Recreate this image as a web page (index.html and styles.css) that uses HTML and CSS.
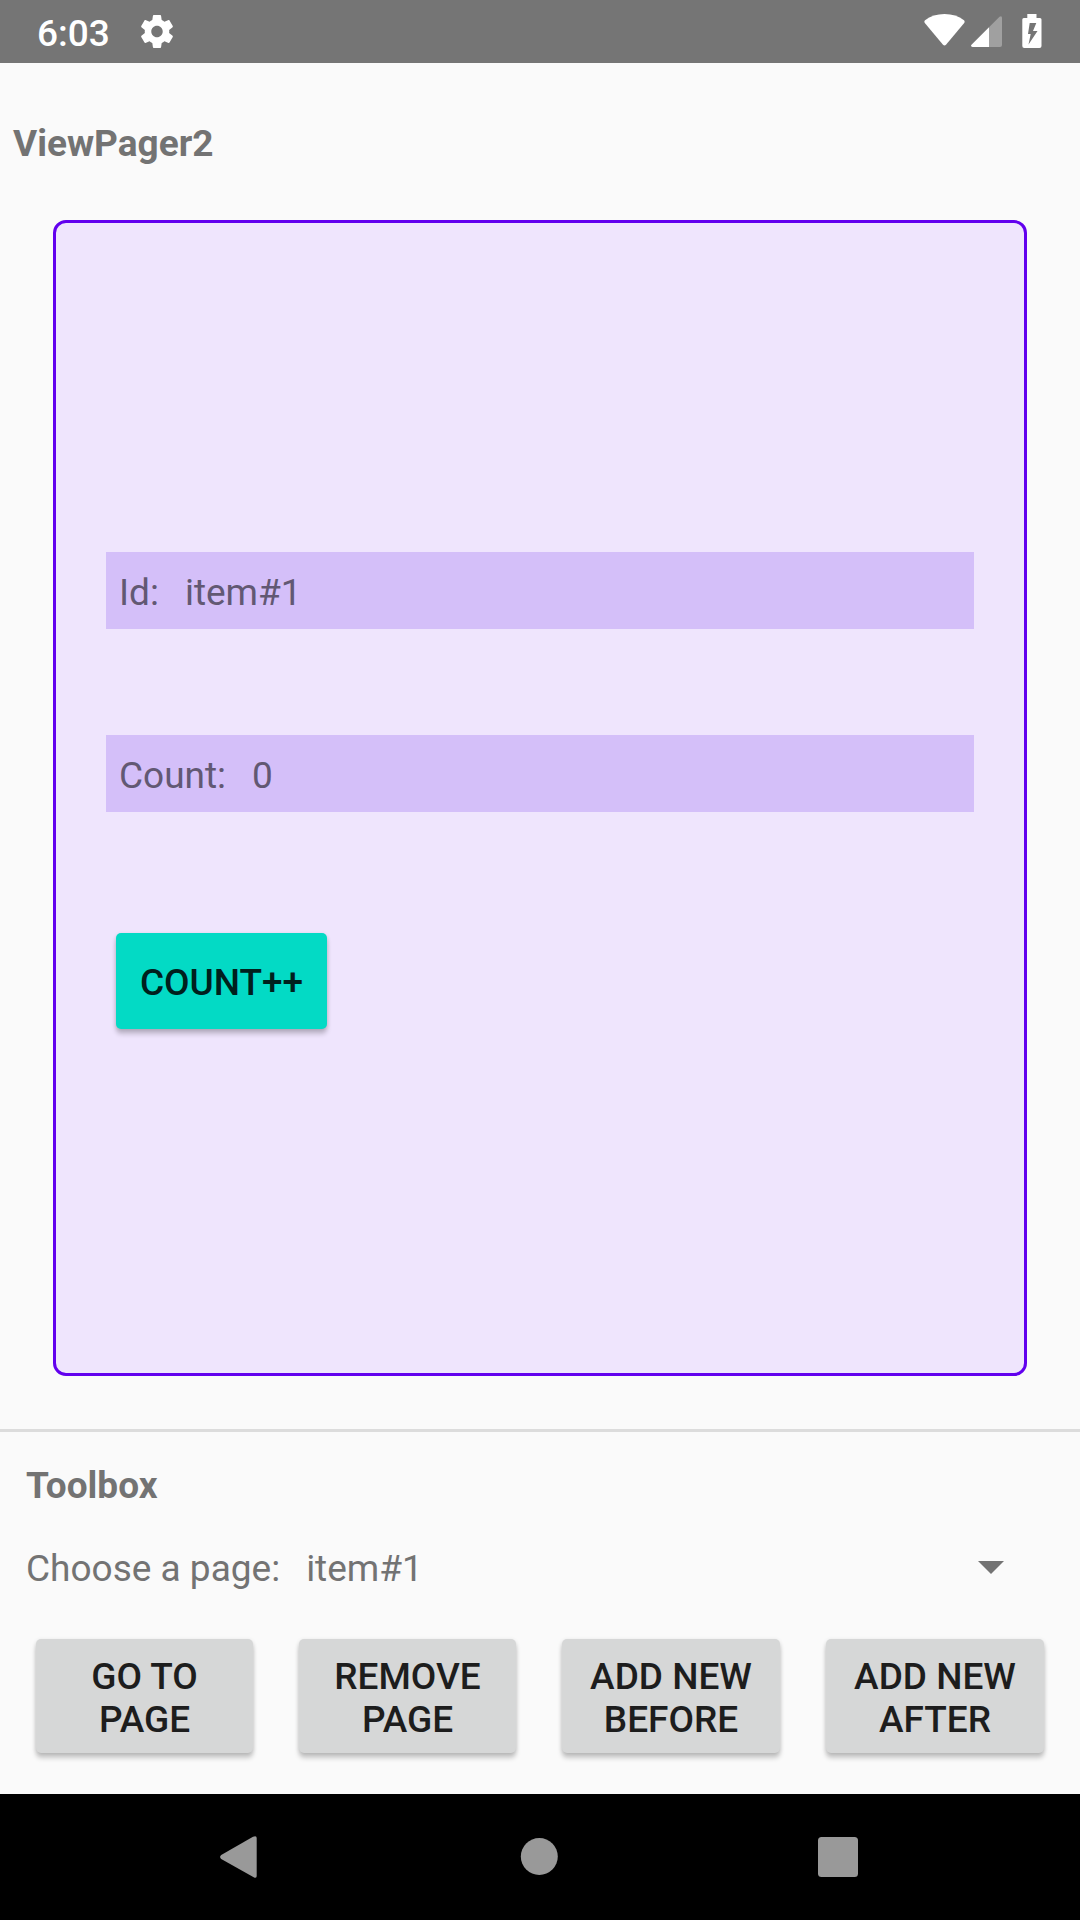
FILE: index.html
```html
<!DOCTYPE html>
<html lang="en">
<head>
<meta charset="utf-8">
<title>ViewPager2</title>
<link rel="stylesheet" href="styles.css">
</head>
<body>
<header class="status-bar">
  <span class="clock">6:03</span>
  <svg class="gear" viewBox="2.2 2 19.6 20" preserveAspectRatio="none"><path d="M19.43 12.98c.04-.32.07-.64.07-.98s-.03-.66-.07-.98l2.11-1.65c.19-.15.24-.42.12-.64l-2-3.46c-.12-.22-.39-.3-.61-.22l-2.49 1c-.52-.4-1.08-.73-1.69-.98l-.38-2.65C14.46 2.18 14.25 2 14 2h-4c-.25 0-.46.18-.49.42l-.38 2.65c-.61.25-1.17.59-1.69.98l-2.49-1c-.23-.09-.49 0-.61.22l-2 3.46c-.13.22-.07.49.12.64l2.11 1.65c-.04.32-.07.65-.07.98s.03.66.07.98l-2.11 1.65c-.19.15-.24.42-.12.64l2 3.46c.12.22.39.3.61.22l2.49-1c.52.4 1.08.73 1.69.98l.38 2.65c.03.24.24.42.49.42h4c.25 0 .46-.18.49-.42l.38-2.65c.61-.25 1.17-.59 1.69-.98l2.49 1c.23.09.49 0 .61-.22l2-3.46c.12-.22.07-.49-.12-.64l-2.11-1.65zM12 15.5c-1.93 0-3.5-1.57-3.5-3.5s1.57-3.5 3.5-3.5 3.5 1.57 3.5 3.5-1.57 3.5-3.5 3.5z"/></svg>
  <svg class="wifi" viewBox="0 0 41 32"><path d="M1 6.3Q9 0 20.500 0T40 6.300Q41.200 7.500 40.200 8.900L22 30.700Q20.500 32.300 19 30.700L.800 8.900Q-.200 7.500 1 6.300Z"/></svg>
  <svg class="signal" viewBox="0 0 31 31"><path class="weak" d="M18 11.200 28.500.7Q31-.8 31 2V29Q31 31 29 31H18Z"/><path d="M18 11.200V31H1.500Q-.9 30.500.5 28.700Z"/></svg>
  <svg class="battery" viewBox="0 0 20 34"><path fill-rule="evenodd" d="M5.300 0H14.500V4H18Q19.500 4 19.500 5.500V32Q19.500 34 17.500 34H2.300Q.3 34 .3 32V5.500Q.3 4 1.800 4H5.300ZM7.700 9 6 20H8.700L6.500 30.500 15.500 17H11L14.300 9Z"/></svg>
</header>
<main class="screen">
  <h1 class="title">ViewPager2</h1>
  <section class="page-card">
    <div class="field"><span>Id:</span><span>item#1</span></div>
    <div class="field"><span>Count:</span><span>0</span></div>
    <button class="button count">COUNT++</button>
  </section>
  <section class="toolbox">
    <h2 class="toolbox-title">Toolbox</h2>
    <div class="chooser">
      <span>Choose a page:</span><span>item#1</span>
      <svg class="caret" viewBox="0 0 26 13"><path d="M0 0H26L13 13Z"/></svg>
    </div>
    <div class="actions">
      <button class="button">GO TO<br>PAGE</button>
      <button class="button">REMOVE<br>PAGE</button>
      <button class="button">ADD NEW<br>BEFORE</button>
      <button class="button">ADD NEW<br>AFTER</button>
    </div>
  </section>
</main>
<nav class="nav-bar">
  <svg class="nav-icon" viewBox="0 0 42 42"><path d="M33 .7Q36.700-.8 36.700 2V40Q36.700 42.800 33.700 41.300L1.200 23Q-1 21 1.200 19Z"/></svg>
  <svg class="nav-icon" viewBox="0 0 42 42"><circle cx="20.300" cy="20.500" r="18.500"/></svg>
  <svg class="nav-icon" viewBox="0 0 42 42"><rect x="1" y="1" width="40" height="40" rx="3.500"/></svg>
</nav>
</body>
</html>
```
FILE: styles.css
```css
* { box-sizing: border-box; }

body {
  margin: 0;
  width: 1080px;
  height: 1920px;
  display: flex;
  flex-direction: column;
  background: #fafafa;
  color: #737373;
  font: 37px/43px Roboto, sans-serif;
}

svg { display: block; flex: none; }

.status-bar {
  height: 63px;
  padding: 0 39px 0 37px;
  display: flex;
  align-items: flex-start;
  background: #757575;
  color: #fff;
  fill: #fff;
}
.clock { width: 104px; margin-top: 12px; font-weight: 500; }
.gear { width: 32px; height: 33px; margin-top: 15px; }
.wifi { width: 41px; height: 32px; margin: 14px 6px 0 auto; }
.signal { width: 31px; height: 31px; margin: 16px 20px 0 0; }
.weak { fill: #a0a0a0; }
.battery { width: 20px; height: 34px; margin: 14px -1px 0 0; }

.screen { height: 1731px; display: flex; flex-direction: column; }
.title { margin: 59px 13px 55px; font-size: inherit; font-weight: 700; }

.page-card {
  height: 1156px;
  margin: 0 53px;
  padding: 0 50px;
  display: flex;
  flex-direction: column;
  justify-content: center;
  gap: 106px;
  background: #efe5fd;
  border: 3px solid #6200ee;
  border-radius: 13px;
}
.field {
  height: 77px;
  padding: 19px 13px 15px;
  display: flex;
  gap: 26px;
  background: #d4bff9;
  color: #625873;
}

.button {
  border: 0;
  padding: 3px 0 0;
  border-radius: 5px;
  background: #d6d7d7;
  color: #1d1d1d;
  font: 500 37px/43px Roboto, sans-serif;
  box-shadow: 0 5px 5px rgba(0, 0, 0, .2), 0 1px 4px rgba(0, 0, 0, .12);
}
.count {
  width: 211px;
  height: 96px;
  margin: 15px 0 16px 10px;
  background: #03dac5;
  color: #00201d;
}

.toolbox {
  margin-top: 53px;
  padding: 32px 36px 0;
  border-top: 3px solid #dcdcdc;
}
.toolbox-title { margin: 0 -10px; font-size: inherit; font-weight: 700; }
.chooser { display: flex; gap: 26px; margin: 40px 40px 49px -10px; }
.caret { width: 26px; height: 13px; margin: 14px 0 0 auto; fill: #737373; }
.actions { display: grid; grid-template-columns: 217px 217px 218px 218px; justify-content: space-between; }
.actions .button { height: 114px; }

.nav-bar {
  height: 126px;
  padding: 0 221px 0 220px;
  display: flex;
  justify-content: space-between;
  align-items: center;
  background: #000;
  fill: #999;
}
.nav-icon { width: 42px; height: 42px; }
```
